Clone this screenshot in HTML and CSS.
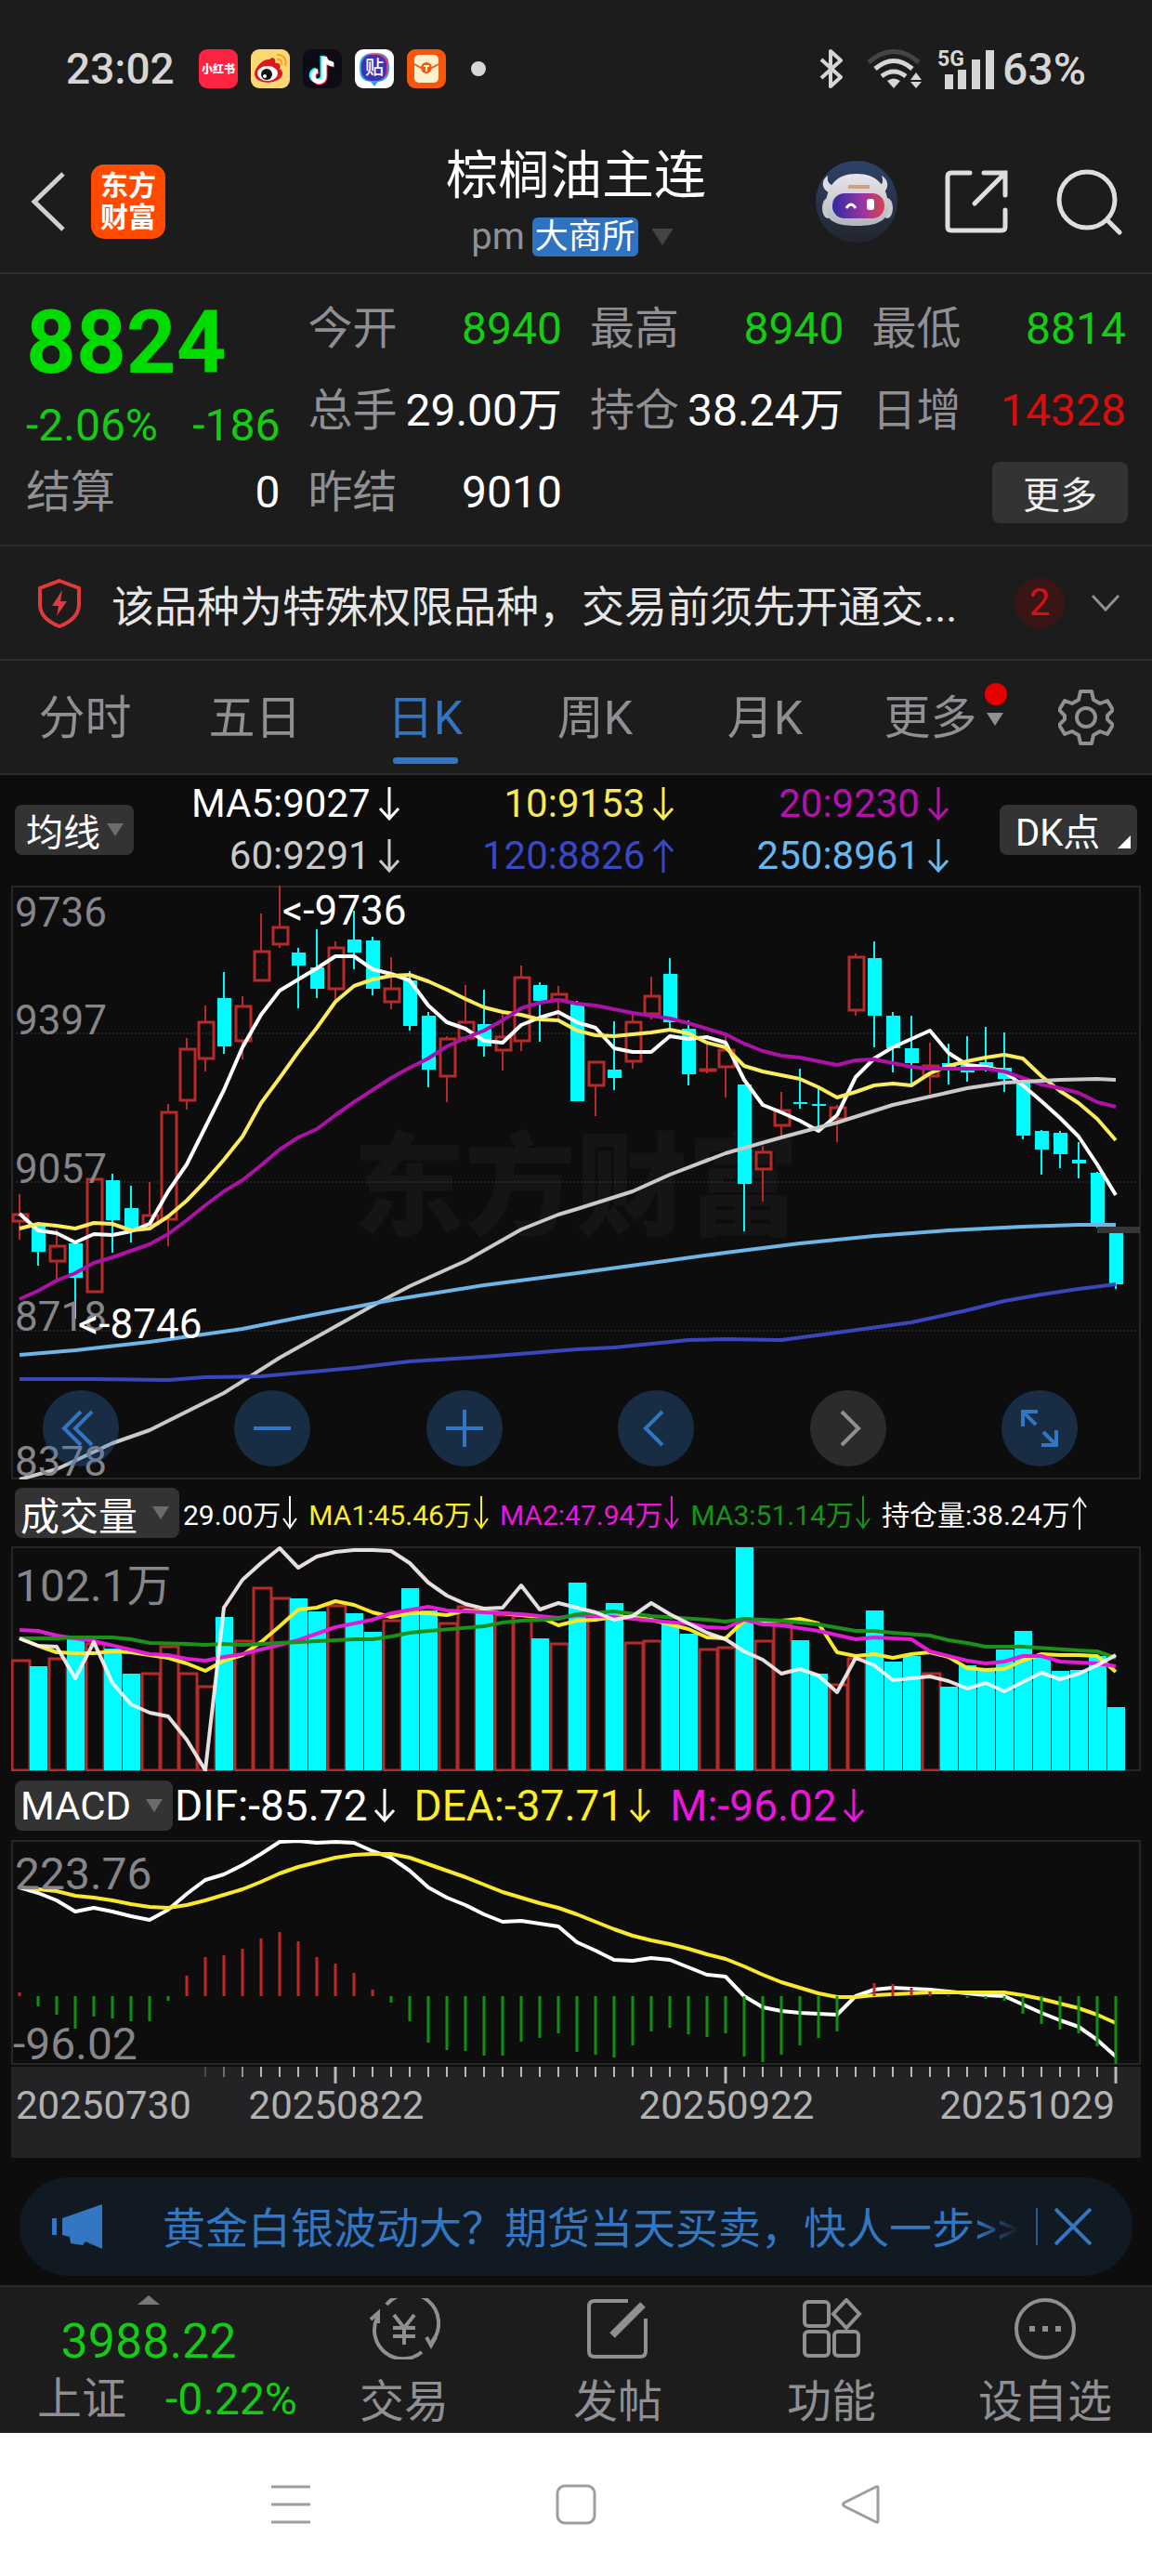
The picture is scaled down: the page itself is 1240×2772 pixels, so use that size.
FILE: index.html
```html
<!DOCTYPE html>
<html lang="zh-CN">
<head>
  <meta charset="UTF-8">
  <meta name="viewport" content="width=device-width, initial-scale=1.0">
  <title>棕榈油主连</title>
  <link rel="stylesheet" href="styles.css">
</head>
<body>
  <svg class="defs" width="0" height="0" aria-hidden="true">
    <symbol id="down" viewBox="0 0 24 36"><path d="M12 0V34M2 23L12 34L22 23" fill="none" stroke="currentColor" stroke-width="3"/></symbol>
    <symbol id="up" viewBox="0 0 24 36"><path d="M12 36V2M2 13L12 2L22 13" fill="none" stroke="currentColor" stroke-width="3"/></symbol>
    <symbol id="down-thin" viewBox="0 0 16 36"><path d="M8 0V34M1 24L8 34L15 24" fill="none" stroke="currentColor" stroke-width="2"/></symbol>
    <symbol id="up-thin" viewBox="0 0 16 36"><path d="M8 36V2M1 12L8 2L15 12" fill="none" stroke="currentColor" stroke-width="2"/></symbol>
    <symbol id="tri" viewBox="0 0 18 14"><path d="M0 0H18L9 14Z" fill="currentColor"/></symbol>
  </svg>

  <div class="status-bar">
    <span class="clock">23:02</span>
    <div class="app-icons">
      <svg width="42" height="42" viewBox="0 0 42 42"><rect width="42" height="42" rx="9" fill="#ff2442"/><text x="21" y="26" font-size="12" font-weight="900" fill="#fff" text-anchor="middle">小红书</text></svg>
      <svg width="42" height="42" viewBox="0 0 42 42">
        <rect width="42" height="42" rx="9" fill="#fbd873"/>
        <path d="M4 26C5 18 14 10 20 11C23 7 28 10 26 15C31 14 33 18 31 21C36 24 35 31 27 34C17 38 4 35 4 26Z" fill="#d9191c"/>
        <ellipse cx="18" cy="26" rx="11" ry="8" fill="#fff"/><circle cx="17" cy="27" r="6" fill="#111"/><circle cx="15" cy="29" r="2" fill="#fff"/>
        <path d="M28 6C35 5 39 11 37 18M28 11C32 10 34 14 33 17" fill="none" stroke="#f5a02c" stroke-width="2"/>
      </svg>
      <svg width="42" height="42" viewBox="0 0 42 42">
        <rect width="42" height="42" rx="9" fill="#0c0b16"/>
        <g fill="none" stroke-width="5">
          <path d="M21 7V27A6 6 0 1 1 14 22M21 7C22 12 26 15 31 15" stroke="#25f4ee"/>
          <path d="M24 9V29A6 6 0 1 1 17 24M24 9C25 14 29 17 34 17" stroke="#fe2c55"/>
          <path d="M23 8V28A6 6 0 1 1 16 23M23 8C24 13 28 16 33 16" stroke="#fff"/>
        </g>
      </svg>
      <svg width="42" height="42" viewBox="0 0 42 42">
        <rect width="42" height="42" rx="9" fill="#fff"/>
        <path d="M21 4C34 4 37 9 37 20C37 30 33 34 25 35L21 40L17 35C8 34 5 30 5 20C5 9 9 4 21 4Z" fill="#2aa9f0"/>
        <rect x="8" y="5" width="28" height="28" rx="11" fill="#e3406c"/><rect x="7" y="6" width="27" height="28" rx="11" fill="#4131b4"/>
        <text x="21" y="27" font-size="20" font-weight="500" fill="#fff" text-anchor="middle">贴</text>
      </svg>
      <svg width="42" height="42" viewBox="0 0 42 42">
        <rect width="42" height="42" rx="9" fill="#f4580f"/><rect x="8" y="6" width="26" height="30" rx="5" fill="#fff0cd"/>
        <path d="M8 16L15 20M34 16L27 20" stroke="#f4580f" stroke-width="2"/><circle cx="21" cy="20" r="6" fill="#f4580f"/>
        <path d="M18 18H24M21 18V24" stroke="#fff0cd" stroke-width="2"/>
      </svg>
      <i class="more-dot"></i>
    </div>
    <div class="signals">
      <svg width="26" height="42" viewBox="0 0 26 42"><path d="M2 11L23 30L12 40V2L23 12L2 31" fill="none" stroke="#d6d6d6" stroke-width="4" stroke-linejoin="round"/></svg>
      <svg class="wifi" width="60" height="42" viewBox="0 0 60 42">
        <g fill="none" stroke="#d6d6d6" stroke-width="5">
          <path d="M2 14Q29 -9 56 14" stroke="#444"/><path d="M9 21Q29 4 49 21"/><path d="M16 29Q29 19 42 29"/>
        </g>
        <path d="M22 34Q29 29 36 34L29 42ZM47 33L53 25L59 33ZM47 35H59L53 42Z" fill="#d6d6d6"/>
      </svg>
      <svg class="cell" width="62" height="44" viewBox="0 0 62 44">
        <text x="0" y="19" font-size="23" font-weight="700" fill="#d6d6d6">5G</text>
        <path d="M8 28h9v16h-9zM22 23h9v21h-9zM37 12h9v32h-9zM52 2h9v42h-9z" fill="#d6d6d6"/>
      </svg>
      <span class="battery">63%</span>
    </div>
  </div>

  <header class="header">
    <div class="header-side">
      <button class="icon-btn" aria-label="返回"><svg width="40" height="66" viewBox="0 0 40 66"><path d="M36 3L5 33L36 63" fill="none" stroke="#d0d0d0" stroke-width="5"/></svg></button>
      <a class="logo" href="#">东方<br>财富</a>
    </div>
    <div class="header-title">
      <h1>棕榈油主连</h1>
      <p><span class="code">pm</span><span class="badge">大商所</span><svg class="title-tri" width="24" height="18"><use href="#tri"/></svg></p>
    </div>
    <div class="header-side header-tools">
      <button class="icon-btn" aria-label="助手">
        <svg width="88" height="88" viewBox="0 0 88 88">
          <defs>
            <linearGradient id="sky" x1="0" y1="0" x2="0" y2="1"><stop offset="0" stop-color="#2e4268"/><stop offset="1" stop-color="#22252f"/></linearGradient>
            <linearGradient id="visor"><stop offset="0" stop-color="#2f2ba0"/><stop offset="0.6" stop-color="#9a35a0"/><stop offset="1" stop-color="#d8434a"/></linearGradient>
            <linearGradient id="shell" x1="0" y1="0" x2="0" y2="1"><stop offset="0" stop-color="#e6e6ea"/><stop offset="1" stop-color="#b4b4bc"/></linearGradient>
          </defs>
          <circle cx="44" cy="44" r="44" fill="url(#sky)"/>
          <path d="M13 16C5 21 6 33 18 35L23 27C14 27 12 22 13 16ZM71 16C80 21 79 33 70 35L65 27C73 26 73 22 71 16Z" fill="#dcdce2"/>
          <ellipse cx="13" cy="51" rx="6" ry="11" fill="#c9c9d0"/><ellipse cx="77" cy="51" rx="6" ry="11" fill="#c9c9d0"/>
          <path d="M44 14C66 14 76 27 78 45C80 62 71 70 44 70C17 70 9 62 11 45C13 27 22 14 44 14Z" fill="url(#shell)"/>
          <rect x="18" y="35" width="56" height="27" rx="13" fill="url(#visor)"/>
          <path d="M35 28H58" stroke="#d0a080" stroke-width="4"/>
          <path d="M33 51Q38 43 43 51" fill="none" stroke="#fff" stroke-width="3"/><rect x="55" y="41" width="8" height="12" rx="3" fill="#fff"/>
        </svg>
      </button>
      <button class="icon-btn" aria-label="分享"><svg width="70" height="70" viewBox="0 0 70 70"><path d="M28 4H8Q4 4 4 8V62Q4 66 8 66H62Q66 66 66 62V44M43 4H66V28M66 4L33 37" fill="none" stroke="#dedede" stroke-width="5" stroke-linecap="round"/></svg></button>
      <button class="icon-btn" aria-label="搜索"><svg width="72" height="72" viewBox="0 0 72 72"><circle cx="34" cy="34" r="30" fill="none" stroke="#dedede" stroke-width="5"/><path d="M56 56L69 69" stroke="#dedede" stroke-width="5" stroke-linecap="round"/></svg></button>
    </div>
  </header>

  <section class="quote">
    <div class="price">
      <strong>8824</strong>
      <p><span>-2.06%</span><span>-186</span></p>
    </div>
    <div class="pair"><span>今开</span><b class="fall">8940</b></div>
    <div class="pair"><span>最高</span><b class="fall">8940</b></div>
    <div class="pair"><span>最低</span><b class="fall">8814</b></div>
    <div class="pair"><span>总手</span><b>29.00万</b></div>
    <div class="pair"><span>持仓</span><b>38.24万</b></div>
    <div class="pair"><span>日增</span><b class="rise">14328</b></div>
    <div class="pair"><span>结算</span><b>0</b></div>
    <div class="pair"><span>昨结</span><b>9010</b></div>
    <button class="more-btn">更多</button>
  </section>

  <section class="notice">
    <svg width="48" height="54" viewBox="0 0 48 54"><path d="M24 3L45 11V28Q45 44 24 52Q3 44 3 28V11Z" fill="none" stroke="#e03a3a" stroke-width="4"/><path d="M27 13L16 30H23L21 41L32 25H25Z" fill="#e03a3a"/></svg>
    <p>该品种为特殊权限品种，交易前须先开通交...</p>
    <span class="count">2</span>
    <svg width="32" height="20" viewBox="0 0 32 20"><path d="M2 2L16 17L30 2" fill="none" stroke="#8f8f94" stroke-width="3"/></svg>
  </section>

  <nav class="tabs">
    <a href="#">分时</a>
    <a href="#">五日</a>
    <a href="#" class="active">日K</a>
    <a href="#">周K</a>
    <a href="#">月K</a>
    <a href="#" class="tab-more">更多<svg width="18" height="14"><use href="#tri"/></svg><i></i></a>
    <button class="icon-btn" aria-label="设置">
      <svg width="60" height="60" viewBox="0 0 60 60"><path d="M24 2H36L38 11L45 15L53 12L59 22L53 28V32L59 38L53 48L45 45L38 49L36 58H24L22 49L15 45L7 48L1 38L7 32V28L1 22L7 12L15 15L22 11Z" fill="none" stroke="#8f8f94" stroke-width="4" stroke-linejoin="round"/><circle cx="30" cy="30" r="10" fill="none" stroke="#8f8f94" stroke-width="4"/></svg>
    </button>
  </nav>

  <main class="charts">
    <div class="ma-bar">
      <button class="pill">均线<svg width="18" height="14"><use href="#tri"/></svg></button>
      <div class="ma-values">
        <span class="ma5">MA5:9027<svg class="arrow"><use href="#down"/></svg></span>
        <span class="ma10">10:9153<svg class="arrow"><use href="#down"/></svg></span>
        <span class="ma20">20:9230<svg class="arrow"><use href="#down"/></svg></span>
        <span class="ma60">60:9291<svg class="arrow"><use href="#down"/></svg></span>
        <span class="ma120">120:8826<svg class="arrow"><use href="#up"/></svg></span>
        <span class="ma250">250:8961<svg class="arrow"><use href="#down"/></svg></span>
      </div>
      <button class="pill dk">DK点<svg width="14" height="14"><path d="M14 0V14H0Z" fill="#fff"/></svg></button>
    </div>

    <div class="price-chart">
      <svg id="priceChart" class="chart" viewBox="12 952 1216 640"></svg>
      <div class="chart-tools">
        <button aria-label="最早"><svg viewBox="0 0 82 82"><path d="M41 23L23 41L41 59M53 23L35 41L53 59"/></svg></button>
        <button aria-label="缩小"><svg viewBox="0 0 82 82"><path d="M21 41H61"/></svg></button>
        <button aria-label="放大"><svg viewBox="0 0 82 82"><path d="M21 41H61M41 21V61"/></svg></button>
        <button aria-label="左移"><svg viewBox="0 0 82 82"><path d="M48 23L30 41L48 59"/></svg></button>
        <button aria-label="右移" class="off"><svg viewBox="0 0 82 82"><path d="M34 23L52 41L34 59"/></svg></button>
        <button aria-label="全屏"><svg viewBox="0 0 82 82"><path d="M23 39V23H39M23 23L37 37M43 59H59V43M59 59L45 45"/></svg></button>
      </div>
    </div>

    <div class="legend legend-vol">
      <button class="pill">成交量<svg width="18" height="14"><use href="#tri"/></svg></button>
      <span>29.00万<svg class="arrow"><use href="#down-thin"/></svg></span>
      <span class="yellow">MA1:45.46万<svg class="arrow"><use href="#down-thin"/></svg></span>
      <span class="magenta">MA2:47.94万<svg class="arrow"><use href="#down-thin"/></svg></span>
      <span class="green">MA3:51.14万<svg class="arrow"><use href="#down-thin"/></svg></span>
      <span>持仓量:38.24万<svg class="arrow"><use href="#up-thin"/></svg></span>
    </div>
    <svg id="volChart" class="chart indicator" viewBox="12 1664 1216 242"></svg>

    <div class="legend legend-macd">
      <button class="pill">MACD<svg width="18" height="14"><use href="#tri"/></svg></button>
      <span>DIF:-85.72<svg class="arrow"><use href="#down"/></svg></span>
      <span class="yellow">DEA:-37.71<svg class="arrow"><use href="#down"/></svg></span>
      <span class="magenta">M:-96.02<svg class="arrow"><use href="#down"/></svg></span>
    </div>
    <svg id="macdChart" class="chart indicator" viewBox="12 1980 1216 244"></svg>
    <svg id="dateAxis" class="chart axis" viewBox="12 2224 1216 98"></svg>

    <div class="banner">
      <svg width="56" height="48" viewBox="0 0 56 48"><path d="M0 15H5V33H0ZM11 15L54 0V48L36 40L33 44L20 42L19 35L11 33Z" fill="#3377c2"/></svg>
      <a href="#">黄金白银波动大？期货当天买卖，快人一步<span>&gt;&gt;</span></a>
      <button class="icon-btn" aria-label="关闭"><svg width="40" height="40" viewBox="0 0 40 40"><path d="M1 1L39 39M39 1L1 39" stroke="#3377c2" stroke-width="4"/></svg></button>
    </div>
  </main>

  <footer class="bottom-nav">
    <a href="#" class="index">
      <svg width="24" height="10" viewBox="0 0 24 10"><path d="M12 0L24 10H0Z" fill="#77777a"/></svg>
      <strong>3988.22</strong>
      <span>上证<b>-0.22%</b></span>
    </a>
    <a href="#"><svg viewBox="0 0 78 66"><path d="M20 7A31 31 0 0 1 69 47M73 42L68 51L63 42M58 58A31 31 0 0 1 10 21M3 23L11 16L11 27M28 18L39 32L50 18M39 32V50M27 32H51M27 41H51"/></svg>交易</a>
    <a href="#"><svg viewBox="0 0 78 66"><path d="M50 3H14Q8 3 8 9V57Q8 63 14 63H63Q69 63 69 57V22"/><path d="M66 7L33 40" stroke-width="8"/></svg>发帖</a>
    <a href="#"><svg viewBox="0 0 78 66"><rect x="10" y="4" width="26" height="26" rx="4"/><rect x="10" y="36" width="26" height="26" rx="4"/><rect x="42" y="36" width="26" height="26" rx="4"/><path d="M55 2L69 17L55 32L41 17Z"/></svg>功能</a>
    <a href="#"><svg viewBox="0 0 78 66"><circle cx="39" cy="33" r="31"/><path d="M25 30V36M39 30V36M53 30V36" stroke-width="6"/></svg>设自选</a>
  </footer>

  <div class="system-nav">
    <button class="icon-btn" aria-label="任务"><svg width="44" height="44" viewBox="0 0 44 44"><path d="M1 3H43M1 22H43M1 41H43"/></svg></button>
    <button class="icon-btn" aria-label="主页"><svg width="44" height="44" viewBox="0 0 44 44"><rect x="2" y="2" width="40" height="40" rx="8"/></svg></button>
    <button class="icon-btn" aria-label="返回"><svg width="44" height="44" viewBox="0 0 44 44"><path d="M40 4V40Q40 42 38 41L4 24Q1 22 4 20L38 3Q40 2 40 4Z"/></svg></button>
  </div>

  <script src="charts.js"></script>
</body>
</html>
```
FILE: styles.css
```css
* { box-sizing: border-box; }
body { margin: 0; background: #0d0d0d; color: #fff; font-family: Roboto, "Noto Sans CJK SC", sans-serif; }
h1, p { margin: 0; font-weight: 400; }
b { font-weight: 400; }
a { color: inherit; text-decoration: none; }
button { border: 0; padding: 0; background: none; color: inherit; font-family: inherit; cursor: pointer; }
svg { display: block; flex-shrink: 0; }
.defs { position: absolute; }
.icon-btn { display: flex; }

/* status bar */
.status-bar { display: flex; align-items: center; height: 148px; padding: 0 71px; background: #1c1c1c; color: #d6d6d6; font-size: 46px; font-weight: 500; }
.app-icons { display: flex; align-items: center; gap: 14px; margin-left: 26px; }
.more-dot { width: 16px; height: 16px; margin-left: 13px; border-radius: 50%; background: #d6d6d6; }
.signals { display: flex; align-items: center; margin-left: auto; }
.wifi { margin-left: 25px; }
.cell { margin: 0 8px 0 16px; }
.battery { font-size: 48px; }

/* header */
.header { display: flex; align-items: center; justify-content: space-between; height: 147px; padding: 0 32px 8px; background: #1c1c1c; border-bottom: 2px solid #2c2c2c; }
.header-side { display: flex; flex: 1; align-items: center; gap: 26px; }
.header-tools { justify-content: flex-end; gap: 50px; }
.logo { width: 80px; height: 80px; padding-top: 6px; border-radius: 14px; background: #ff4a00; font-size: 30px; font-weight: 700; line-height: 34px; text-align: center; }
.header-title { text-align: center; }
.header-title h1 { font-size: 56px; line-height: 64px; }
.header-title p { display: flex; align-items: center; justify-content: center; margin-top: 12px; padding-right: 8px; }
.code { color: #8f8f94; font-size: 40px; line-height: 44px; }
.badge { margin: 0 14px 0 8px; padding: 0 3px; border-radius: 6px; background: #2f73c0; font-size: 36px; line-height: 42px; }
.title-tri { color: #444; }

/* quote */
.quote { display: grid; grid-template-columns: repeat(4, 1fr); grid-auto-rows: 88px; column-gap: 30px; align-items: center; padding: 15px 28px 12px; background: #1c1c1c; border-bottom: 2px solid #2a2a2a; font-size: 48px; }
.price { grid-row: span 2; align-self: start; color: #00dc00; }
.price strong { display: block; font-size: 94px; font-weight: 700; line-height: 118px; }
.price p { display: flex; justify-content: space-between; color: #14cc14; line-height: 60px; }
.pair { display: flex; align-items: baseline; justify-content: space-between; line-height: 60px; white-space: nowrap; }
.pair span { color: #8f8f94; }
.fall { color: #14cc14; }
.rise { color: #d80d0d; }
.more-btn { grid-column: 4; justify-self: end; width: 146px; height: 66px; margin-right: -2px; border-radius: 8px; background: #333; color: #eee; font-size: 40px; }

/* notice */
.notice { display: flex; align-items: center; height: 123px; padding: 0 34px 0 40px; background: #1c1c1c; border-bottom: 2px solid #2c2c2c; font-size: 46px; color: #e6e6e6; }
.notice p { flex: 1; margin-left: 32px; white-space: nowrap; }
.count { width: 54px; margin-right: 28px; border-radius: 50%; background: #3a1515; color: #d81010; font-size: 40px; line-height: 54px; text-align: center; }

/* period tabs */
.tabs { display: grid; grid-template-columns: repeat(6, 183fr) 142fr; height: 123px; align-items: center; justify-items: center; background: #1c1c1c; border-bottom: 2px solid #2c2c2c; color: #8f8f94; font-size: 50px; }
.tabs a { position: relative; padding-top: 4px; line-height: 117px; }
.tabs .active { color: #3275c3; }
.active::after { content: ""; position: absolute; left: 50%; bottom: 10px; width: 70px; height: 7px; margin-left: -35px; border-radius: 3px; background: #3275c3; }
.tabs .tab-more { display: flex; align-items: center; gap: 10px; margin-left: 18px; }
.tab-more i { position: absolute; top: 24px; right: -4px; width: 24px; height: 24px; border-radius: 50%; background: #e60000; }

/* charts */
.charts { padding: 0 12px; }
.chart { width: 100%; height: auto; }
.chart text { font-size: 44px; fill: #85858a; }
.indicator text { font-size: 48px; }
.chart .mark { fill: #fff; }
.chart .date { font-size: 42px; fill: #b2b2b2; }
.chart .watermark { font-size: 120px; font-weight: 900; fill: #151515; }
.pill { display: flex; flex-shrink: 0; align-items: center; justify-content: space-between; height: 54px; padding: 0 11px 0 6px; border-radius: 8px; background: #333; color: #fff; font-size: 40px; }
.pill svg { color: #6c6c6c; }
.arrow { width: 24px; height: 36px; }

.ma-bar { display: flex; align-items: center; height: 118px; padding: 0 4px; }
.ma-bar .pill { width: 128px; padding-left: 12px; }
.ma-bar .dk { width: 148px; padding: 0 7px 0 17px; }
.dk svg { align-self: flex-end; margin-bottom: 7px; }
.ma-values { display: grid; flex: 1; grid-template-columns: 287fr 296fr 296fr; margin-right: 54px; font-size: 42px; line-height: 56px; }
.ma-values span { display: flex; align-items: center; justify-content: flex-end; gap: 8px; }
.ma10 { color: #f7e957; }
.ma20 { color: #b512ad; }
.ma60 { color: #cacaca; }
.ma120 { color: #3a48c8; }
.ma250 { color: #67b7f0; }

.price-chart { position: relative; }
.chart-tools { position: absolute; right: 68px; bottom: 14px; left: 34px; display: flex; justify-content: space-between; }
.chart-tools button { width: 82px; height: 82px; border-radius: 50%; background: rgba(49, 117, 193, 0.3); }
.chart-tools .off { background: #2b2b2b; }
.chart-tools svg { fill: none; stroke: #3275c3; stroke-width: 4; }
.chart-tools .off svg { stroke: #909090; }

.legend { display: flex; align-items: center; padding-left: 4px; white-space: nowrap; }
.legend span { display: flex; align-items: center; }
.legend-vol { height: 72px; gap: 12px; font-size: 30px; }
.legend-vol .pill { width: 177px; margin-right: -8px; font-size: 42px; }
.legend-vol span { gap: 2px; }
.legend-vol .arrow { width: 16px; }
.legend-macd { height: 74px; gap: 20px; font-size: 46px; }
.legend-macd .pill { width: 170px; margin-right: -18px; font-size: 42px; }
.legend-macd span { gap: 6px; }
.yellow { color: #fbec2c; }
.magenta { color: #ea16dc; }
.green { color: #179417; }
.axis { background: #232325; }

/* banner */
.banner { display: flex; align-items: center; height: 106px; margin: 21px 9px 10px; padding: 0 44px 0 35px; border-radius: 53px; background: #111a22; color: #3377c2; font-size: 46px; }
.banner a { flex: 1; margin-left: 63px; padding-bottom: 4px; white-space: nowrap; }
.banner a span { background: linear-gradient(90deg, #3377c2, #111a22); background-clip: text; color: transparent; }
.banner button { padding-left: 18px; border-left: 2px solid #285a92; }

/* bottom nav */
.bottom-nav { display: grid; grid-template-columns: 320fr repeat(4, 230fr); height: 159px; background: #1c1c1c; border-top: 2px solid #2a2a2a; color: #8f8f94; font-size: 48px; text-align: center; white-space: nowrap; }
.bottom-nav a { display: flex; flex-direction: column; align-items: center; padding-top: 12px; line-height: 92px; }
.bottom-nav a > svg { width: 78px; height: 66px; fill: none; stroke: #8f8f94; stroke-width: 4; }
.bottom-nav .index { padding-top: 9px; line-height: 64px; }
.bottom-nav .index > svg { width: 24px; height: 10px; stroke: none; }
.index strong { margin-top: 10px; color: #14cc14; font-size: 52px; font-weight: 400; line-height: 60px; }
.index span { padding-left: 40px; }
.index b { margin-left: 42px; color: #14cc14; }

.system-nav { display: grid; grid-template-columns: repeat(3, 1fr); height: 154px; padding: 0 160px; align-items: center; justify-items: center; background: #fff; }
.system-nav svg { fill: none; stroke: #9e9e9e; stroke-width: 3; }
```
FILE: charts.js
```js
const RED = '#b82a2a', CYAN = '#00fcff';
const cx = i => 21 + 20 * i;

// [direction, high, body top, body bottom, low]
const candles = [
  ['u',1285,1307,1314,1334], ['d',1318,1319,1347,1362], ['u',1323,1341,1357,1376], ['d',1338,1338,1375,1419],
  ['u',1269,1269,1390,1390], ['d',1263,1270,1313,1348], ['d',1276,1300,1322,1337], ['u',1272,1308,1317,1317],
  ['u',1188,1197,1312,1341], ['u',1117,1129,1184,1194], ['u',1082,1100,1139,1153], ['d',1046,1074,1126,1134],
  ['u',1072,1083,1120,1140], ['u',983,1024,1055,1055], ['u',953,998,1016,1020], ['d',1020,1025,1039,1085],
  ['d',1000,1041,1064,1074], ['u',1013,1020,1064,1077], ['d',980,1011,1025,1043], ['d',1008,1012,1064,1071],
  ['u',1030,1064,1078,1086], ['d',1045,1055,1104,1109], ['d',1089,1093,1151,1170], ['u',1115,1118,1158,1186],
  ['u',1060,1100,1117,1121], ['d',1065,1102,1126,1137], ['u',1090,1116,1130,1152], ['u',1039,1052,1120,1131],
  ['d',1057,1060,1077,1121], ['u',1061,1070,1076,1100], ['d',1077,1080,1185,1185], ['u',1142,1143,1168,1201],
  ['d',1099,1151,1160,1173], ['u',1092,1100,1142,1150], ['u',1051,1072,1091,1097], ['d',1031,1048,1100,1107],
  ['d',1098,1107,1156,1168], ['u',1120,1151,1152,1155], ['u',1113,1130,1148,1181], ['d',1167,1167,1274,1325],
  ['u',1233,1240,1258,1293], ['u',1175,1195,1211,1223], ['d',1150,1186,1188,1193], ['d',1168,1188,1190,1213],
  ['u',1189,1192,1204,1229], ['u',1026,1030,1087,1093], ['d',1013,1031,1093,1127], ['d',1089,1093,1128,1154],
  ['d',1093,1128,1144,1170], ['u',1122,1147,1158,1177], ['d',1123,1144,1152,1167], ['d',1115,1145,1154,1164],
  ['d',1105,1143,1149,1153], ['d',1111,1149,1161,1175], ['d',1163,1165,1222,1226], ['d',1216,1217,1237,1264],
  ['d',1217,1219,1242,1257], ['d',1229,1248,1252,1268], ['d',1261,1262,1317,1321], ['d',1327,1327,1382,1387]
];

const ma5 = [1306,1324,1327,1337,1328,1329,1325,1317,1282,1253,1213,1173,1127,1092,1066,1054,1042,1029,1029,1043,1048,1055,1082,1100,1107,1120,1122,1103,1095,1089,1100,1106,1128,1132,1132,1115,1118,1116,1122,1162,1189,1197,1206,1217,1200,1159,1139,1127,1118,1109,1133,1146,1148,1153,1168,1185,1203,1223,1253,1286];
const ma10 = [1322,1317,1319,1322,1316,1317,1324,1322,1309,1292,1271,1248,1223,1187,1160,1132,1106,1078,1061,1054,1050,1049,1056,1065,1075,1084,1089,1092,1097,1098,1109,1114,1115,1113,1111,1108,1112,1122,1127,1147,1153,1157,1161,1170,1181,1175,1168,1166,1168,1155,1147,1142,1138,1135,1139,1158,1174,1187,1204,1227];
const ma20 = [1398,1389,1378,1370,1359,1353,1346,1339,1328,1313,1297,1282,1270,1254,1237,1224,1215,1200,1186,1173,1160,1149,1139,1126,1117,1109,1098,1085,1079,1076,1080,1082,1086,1090,1093,1096,1101,1107,1113,1123,1131,1136,1138,1142,1146,1141,1140,1144,1148,1150,1150,1150,1150,1153,1160,1167,1171,1176,1186,1191];

// slow averages are given only where they bend: [index, y]
const ma60 = [[0,1592],[2,1581],[5,1553],[7,1539],[11,1499],[14,1461],[19,1405],[21,1384],[24,1357],[27,1323],[29,1307],[30,1301],[33,1282],[35,1264],[38,1241],[41,1224],[44,1208],[47,1189],[49,1180],[51,1171],[53,1165],[56,1162],[58,1161],[59,1162]];
const ma250 = [[0,1458],[3,1453],[7,1444],[12,1430],[15,1418],[20,1399],[25,1383],[30,1370],[34,1359],[38,1348],[42,1338],[46,1330],[50,1324],[54,1320],[57,1318],[59,1318]];
const ma120 = [[0,1484],[4,1484],[8,1485],[10,1482],[13,1481],[18,1472],[21,1465],[25,1460],[30,1452],[32,1450],[36,1442],[38,1441],[41,1442],[44,1434],[48,1423],[51,1410],[53,1400],[55,1393],[57,1387],[59,1382]];

const volTop = [1786,1793,1784,1764,1768,1774,1801,1800,1771,1800,1814,1740,1765,1708,1719,1720,1734,1727,1736,1756,1743,1709,1733,1746,1728,1736,1737,1738,1763,1768,1703,1741,1725,1767,1765,1748,1758,1774,1772,1665,1765,1747,1765,1801,1812,1784,1733,1788,1782,1800,1815,1792,1798,1775,1755,1783,1798,1797,1782,1837];
const volMa1 = [1763,1771,1778,1779,1779,1777,1778,1781,1784,1790,1798,1787,1781,1767,1750,1732,1730,1723,1727,1735,1740,1736,1736,1738,1733,1734,1736,1738,1740,1749,1744,1743,1740,1740,1743,1748,1753,1762,1763,1744,1745,1744,1742,1747,1778,1782,1780,1784,1780,1778,1783,1795,1797,1796,1787,1780,1781,1781,1782,1799];
const volMa2 = [[0,1754],[1,1755],[2,1760],[4,1766],[7,1780],[8,1781],[9,1785],[10,1787],[11,1783],[12,1780],[14,1770],[15,1765],[17,1751],[19,1743],[20,1736],[22,1729],[23,1733],[25,1735],[27,1737],[29,1741],[30,1738],[32,1740],[34,1744],[36,1747],[37,1751],[38,1752],[39,1743],[40,1748],[41,1749],[43,1755],[45,1764],[46,1762],[48,1764],[49,1777],[51,1787],[52,1790],[53,1788],[54,1782],[55,1782],[56,1788],[58,1790],[59,1793]];
const volMa3 = [[0,1763],[2,1763],[3,1762],[4,1762],[5,1762],[6,1764],[7,1768],[9,1769],[10,1770],[11,1769],[12,1770],[14,1768],[18,1764],[19,1764],[20,1761],[21,1757],[22,1755],[25,1750],[26,1746],[27,1744],[29,1742],[30,1737],[32,1734],[34,1739],[37,1743],[38,1745],[39,1742],[41,1744],[43,1748],[45,1755],[46,1755],[47,1757],[49,1760],[50,1765],[51,1768],[52,1772],[54,1772],[57,1776],[58,1777],[59,1784]];
const holding = [1763,1771,1772,1806,1767,1811,1834,1843,1847,1872,1905,1730,1700,1682,1666,1687,1675,1670,1668,1668,1669,1682,1703,1717,1726,1731,1730,1706,1732,1725,1730,1735,1743,1739,1725,1737,1747,1757,1764,1777,1786,1801,1796,1803,1821,1784,1792,1808,1806,1804,1809,1817,1811,1820,1810,1800,1807,1801,1792,1781];

const macd = [-4,11,20,35,22,24,27,27,5,-22,-42,-44,-51,-62,-69,-59,-42,-35,-25,-7,7,27,50,58,59,64,64,49,45,40,60,63,66,53,38,34,41,44,40,65,71,63,53,45,38,0,-14,-13,-9,-5,-1,2,3,5,19,30,36,40,54,73];
const dif = [2031,2037,2045,2057,2053,2057,2062,2066,2055,2038,2023,2017,2007,1995,1982,1981,1983,1982,1983,1992,1999,2013,2031,2042,2050,2060,2068,2067,2070,2073,2090,2099,2109,2110,2107,2109,2117,2125,2127,2148,2160,2164,2166,2167,2168,2148,2141,2139,2140,2141,2143,2145,2147,2148,2157,2166,2174,2181,2195,2213];
const dea = [2031,2033,2035,2040,2042,2045,2049,2052,2053,2050,2045,2039,2033,2025,2016,2009,2004,1999,1996,1995,1995,1999,2006,2013,2020,2028,2036,2042,2048,2053,2060,2068,2076,2083,2088,2092,2097,2103,2108,2116,2125,2133,2139,2145,2149,2149,2147,2146,2145,2144,2144,2144,2144,2144,2147,2151,2156,2161,2168,2177];

function line(data, color) {
  const points = data.map((p, i) => Array.isArray(p) ? `${cx(p[0])},${p[1]}` : `${cx(i)},${p}`).join(' ');
  return `<polyline points="${points}" fill="none" stroke="${color}" stroke-width="4" stroke-linejoin="round"/>`;
}

function text(x, y, value, cls = '', anchor = 'start') {
  return `<text x="${x}" y="${y}" class="${cls}" text-anchor="${anchor}">${value}</text>`;
}

function frame(top, bottom) {
  return `<rect x="13" y="${top}" width="1214" height="${bottom - top}" fill="none" stroke="#262626" stroke-width="2"/>`;
}

function drawPrice() {
  let svg = text(620, 1320, '东方财富', 'watermark', 'middle') + frame(954, 1591);
  [1112, 1272, 1432].forEach(y => {
    svg += `<path d="M13 ${y}H1227" stroke="#3a3a3a" stroke-dasharray="2 2"/>`;
  });
  candles.forEach(([dir, high, top, bottom, low], i) => {
    const x = cx(i), color = dir === 'u' ? RED : CYAN;
    svg += `<path d="M${x} ${high}V${top}M${x} ${bottom}V${low}" stroke="${color}" stroke-width="2"/>`;
    svg += dir === 'u'
      ? `<rect x="${x - 7}" y="${top}" width="16" height="${bottom - top}" fill="none" stroke="${RED}" stroke-width="3"/>`
      : `<rect x="${x - 7}" y="${top}" width="15" height="${bottom - top}" fill="${CYAN}"/>`;
  });
  svg += line(ma5, '#fff') + line(ma10, '#fcec60') + line(ma20, '#ac12a6');
  svg += line(ma60, '#cacaca') + line(ma120, '#3b46bc') + line(ma250, '#6fb5e8');
  svg += '<rect x="1181" y="1320" width="46" height="7" fill="#363636"/>';
  svg += text(16, 997, 9736) + text(16, 1113, 9397) + text(16, 1273, 9057) + text(16, 1432, 8718) + text(16, 1588, 8378);
  svg += text(304, 995, '&lt;-9736', 'mark') + text(84, 1440, '&lt;-8746', 'mark');
  document.getElementById('priceChart').innerHTML = svg;
}

function drawVolume() {
  let svg = frame(1665, 1905);
  volTop.forEach((top, i) => {
    const x = 12 + 20 * i;
    svg += candles[i][0] === 'u'
      ? `<rect x="${x + 1}" y="${top + 1}" width="19" height="${1904 - top}" fill="none" stroke="${RED}" stroke-width="3"/>`
      : `<rect x="${x}" y="${top}" width="19" height="${1905 - top}" fill="${CYAN}"/>`;
  });
  svg += line(volMa1, '#f8e92e') + line(volMa2, '#e01cd4') + line(volMa3, '#1c9018') + line(holding, 'rgba(255,245,245,0.9)');
  svg += text(16, 1723, '102.1万');
  document.getElementById('volChart').innerHTML = svg;
}

function drawMacd() {
  let svg = frame(1981, 2221) + line(dif, '#fff') + line(dea, '#f8e92e');
  macd.forEach((v, i) => {
    svg += `<path d="M${cx(i)} 2148v${v}" stroke="${v < 0 ? '#c42424' : '#119011'}" stroke-width="3"/>`;
  });
  svg += text(16, 2033, '223.76') + text(14, 2216, '-96.02');
  document.getElementById('macdChart').innerHTML = svg;
}

function drawDates() {
  let svg = '';
  for (let i = 10; i < 60; i++) {
    const major = i % 21 === 17;
    svg += `<path d="M${cx(i)} 2224v${major ? 18 : 11}" stroke="#b8b8b8" stroke-width="${major ? 3 : 2}" opacity="${Math.min(1, (i - 9) / 4)}"/>`;
  }
  svg += text(17, 2280, 20250730, 'date') + text(362, 2280, 20250822, 'date', 'middle');
  svg += text(782, 2280, 20250922, 'date', 'middle') + text(1200, 2280, 20251029, 'date', 'end');
  document.getElementById('dateAxis').innerHTML = svg;
}

drawPrice();
drawVolume();
drawMacd();
drawDates();
```
